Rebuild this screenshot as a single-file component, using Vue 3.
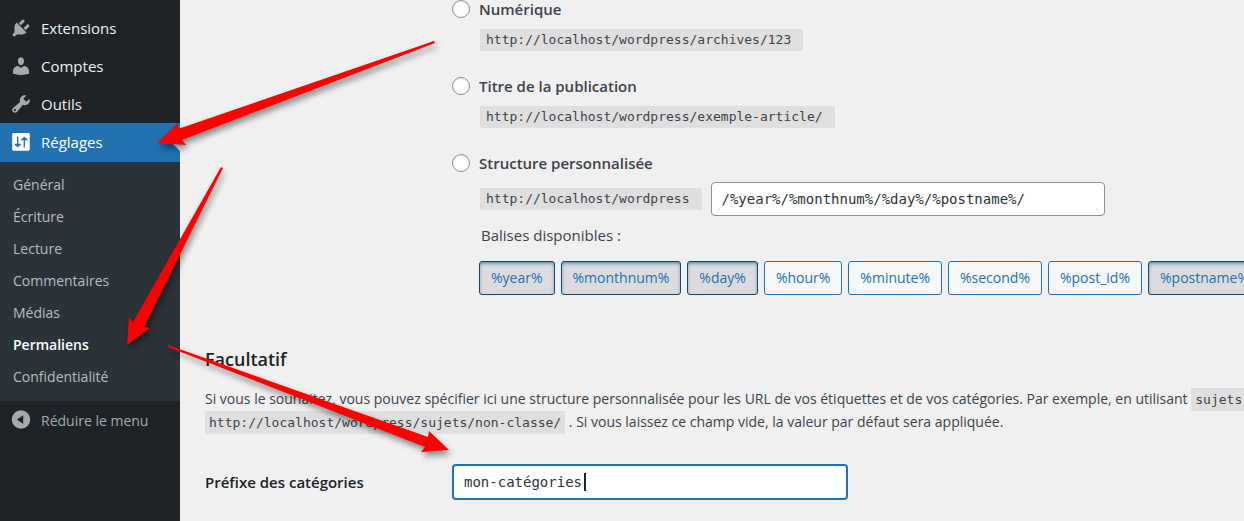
<script setup>
import { ref } from 'vue'

const menu = [
  { label: 'Extensions', d: 'M13.11 4.36L9.87 7.6 8 5.73l3.24-3.24c.35-.34 1.05-.2 1.56.32.52.51.66 1.21.31 1.55zm-8 1.77l.91-1.12 9.01 9.01-1.19.84c-.71.71-2.63 1.16-3.82 1.16H6.14L4.9 17.26c-.59.59-1.54.59-2.12 0-.59-.58-.59-1.53 0-2.12l1.24-1.24v-3.88c0-1.13.4-3.19 1.09-3.89zm7.26 3.97l3.24-3.24c.34-.35 1.04-.21 1.55.31.52.51.66 1.21.31 1.55l-3.24 3.25z' },
  { label: 'Comptes', d: 'M10 9.25c-2.27 0-2.73-3.44-2.73-3.44C7 4.02 7.82 2 9.97 2c2.16 0 2.98 2.02 2.71 3.81 0 0-.41 3.44-2.68 3.44zm0 2.57L12.72 10c2.39 0 4.52 2.33 4.52 4.53v2.49s-3.65 1.13-7.24 1.13c-3.65 0-7.24-1.13-7.24-1.13v-2.49c0-2.25 1.94-4.48 4.47-4.48z' },
  { label: 'Outils', d: 'M16.68 9.77c-1.34 1.34-3.3 1.67-4.95.99l-5.41 6.52c-.99.99-2.59.99-3.58 0s-.99-2.59 0-3.57l6.52-5.42c-.68-1.65-.35-3.61.99-4.95 1.28-1.28 3.12-1.62 4.72-1.06l-2.89 2.89 2.82 2.82 2.86-2.87c.53 1.58.18 3.39-1.08 4.65zM3.81 16.21c.4.39 1.04.39 1.43 0 .4-.4.4-1.04 0-1.43-.39-.4-1.03-.4-1.43 0-.39.39-.39 1.03 0 1.43z' },
  { label: 'Réglages', current: true, d: 'M3 1h14a1 1 0 0 1 1 1v14a1 1 0 0 1-1 1H3a1 1 0 0 1-1-1V2a1 1 0 0 1 1-1zM6.4 4v6.6H4.3v1.6h1l1.7 2 1.7-2h1v-1.6H7.6V4zM12.4 14.2h1.2V7.6h2.1V6h-1L13 4l-1.7 2h-1v1.6h2.1z' },
]
const submenu = ['Général', 'Écriture', 'Lecture', 'Commentaires', 'Médias', 'Permaliens', 'Confidentialité']
const options = [
  { id: 'numeric', label: 'Numérique', url: 'http://localhost/wordpress/archives/123' },
  { id: 'postname', label: 'Titre de la publication', url: 'http://localhost/wordpress/exemple-article/' },
]
const tags = ['year', 'monthnum', 'day', 'hour', 'minute', 'second', 'post_id', 'postname']
const structure = ref('/%year%/%monthnum%/%day%/%postname%/')
const prefix = ref('mon-catégories')
const isUsed = (tag) => structure.value.includes(`%${tag}%`)
</script>

<template>
  <div class="page">
    <nav class="sidebar">
      <a v-for="item in menu" :key="item.label" href="#" class="item" :class="{ current: item.current }">
        <svg viewBox="0 0 20 20" class="icon"><path :d="item.d" fill-rule="evenodd" /></svg>
        {{ item.label }}
      </a>
      <div class="submenu">
        <a v-for="s in submenu" :key="s" href="#" :class="{ active: s === 'Permaliens' }">{{ s }}</a>
      </div>
      <button type="button" class="item collapse">
        <svg viewBox="0 0 20 20" class="icon"><path fill-rule="evenodd" d="M10 1.2a8.4 8.4 0 1 1 0 16.8 8.4 8.4 0 0 1 0-16.8zM12 5.6 6.4 9.6l5.6 4z" /></svg>
        Réduire le menu
      </button>
    </nav>

    <main>
      <div class="options">
        <div v-for="o in options" :key="o.id" class="option">
          <input :id="o.id" type="radio" name="structure" />
          <label :for="o.id">{{ o.label }}</label>
          <div class="detail"><code>{{ o.url }}</code></div>
        </div>
        <div class="option">
          <input id="custom" type="radio" name="structure" />
          <label for="custom">Structure personnalisée</label>
          <div class="detail custom">
            <code>http://localhost/wordpress</code>
            <input v-model="structure" type="text" class="field" aria-label="Structure personnalisée" />
          </div>
          <p class="hint">Balises disponibles :</p>
          <div class="tags">
            <button v-for="t in tags" :key="t" type="button" :class="{ used: isUsed(t) }">%{{ t }}%</button>
          </div>
        </div>
      </div>

      <h2>Facultatif</h2>
      <p class="text">
        Si vous le souhaitez, vous pouvez spécifier ici une structure personnalisée pour les URL de vos étiquettes et de vos catégories. Par exemple, en utilisant <code>sujets</code><br />
        <code>http://localhost/wordpress/sujets/non-classe/</code> . Si vous laissez ce champ vide, la valeur par défaut sera appliquée.
      </p>
      <div class="row">
        <label for="prefix">Préfixe des catégories</label>
        <div class="focused">
          <input id="prefix" v-model="prefix" type="text" class="field" />
          <span class="caret"></span>
        </div>
      </div>
    </main>

    <svg class="arrows" width="460" height="470" viewBox="0 0 460 470">
      <path d="M157 143 178 123V129L434 41 435 43 182 140 186 145Z" />
      <path d="M127 345 129 317 133 322 221 167 223 168 144 327 150 328Z" />
      <path d="M449 450 429 431 428 437 168 345V347L425 447 421 452Z" />
    </svg>
  </div>
</template>

<style>
body {
  background: #f0f0f0;
}
</style>

<style scoped>
* {
  box-sizing: border-box;
}
.page {
  position: relative;
  display: flex;
  height: 100vh;
  overflow: hidden;
  background: #f0f0f0;
  color: #3c434a;
  font: 14px/23px "Open Sans", "Noto Sans", sans-serif;
}
.sidebar {
  flex: 0 0 180px;
  padding-top: 9px;
  background: #1d2327;
}
.item {
  display: flex;
  align-items: center;
  gap: 9px;
  width: 100%;
  height: 38px;
  padding: 0 10px;
  border: 0;
  background: none;
  color: #f0f0f1;
  font: inherit;
  font-size: 15px;
  text-decoration: none;
}
.icon {
  flex: none;
  width: 22px;
  height: 22px;
  fill: #a7aaad;
}
.current {
  position: relative;
  height: 39px;
  background: #2271b1;
  color: #fff;
}
.current .icon {
  fill: #fff;
}
.current::after {
  content: "";
  position: absolute;
  right: 0;
  top: 10px;
  border: 9px solid transparent;
  border-right-color: #f0f0f0;
  border-left: 0;
}
.submenu {
  display: flex;
  flex-direction: column;
  padding: 7px 13px 8px;
  background: #2c3338;
}
.submenu a {
  color: #b8bbbe;
  line-height: 32px;
  text-decoration: none;
}
.submenu .active {
  color: #fff;
  font-weight: 600;
}
.collapse {
  color: #a7aaad;
  font-size: 14px;
}
main {
  flex: 1;
  min-width: 0;
  padding-left: 25px;
}
.options {
  display: flex;
  flex-direction: column;
  gap: 26px;
  padding-left: 247px;
}
.option {
  display: grid;
  grid-template-columns: 18px 1fr;
  column-gap: 9px;
}
.option label {
  font-size: 15px;
  font-weight: 600;
  line-height: 18px;
}
input[type="radio"] {
  appearance: none;
  width: 18px;
  height: 18px;
  margin: 0;
  border: 1px solid #8c8f94;
  border-radius: 50%;
  background: #fff;
  box-shadow: inset 0 1px 2px rgba(0, 0, 0, 0.1);
}
.detail,
.hint,
.tags {
  grid-column: 2;
}
.detail {
  display: flex;
  align-items: center;
  margin-top: 11px;
  padding-left: 1px;
}
code {
  padding: 4px 6px;
  background: #dfdfdf;
  font: 13px/14px "DejaVu Sans Mono", monospace;
}
.option code {
  padding-right: 12px;
}
.text code {
  padding: 4px;
}
.custom {
  gap: 9px;
  margin-top: 10px;
}
.field {
  width: 394px;
  height: 34px;
  padding: 0 10px;
  border: 1px solid #8c8f94;
  border-radius: 4px;
  background: #fff;
  color: #2c3338;
  font: 14px "DejaVu Sans Mono", monospace;
  outline: 0;
}
.hint {
  margin: 8px 0 14px 2px;
  font-size: 15px;
}
.tags {
  display: flex;
  gap: 6px;
}
.tags button {
  flex: none;
  height: 34px;
  padding: 0 11px 2px;
  border: 1px solid #2271b1;
  border-radius: 3px;
  background: #f6f7f7;
  color: #2271b1;
  font: inherit;
}
.tags .used {
  border-color: #0a4b78;
  background: #dcdcde;
  box-shadow: inset 0 2px 5px -2px #0a4b78;
}
h2 {
  margin: 52px 0 16px;
  color: #1d2327;
  font-size: 18px;
  font-weight: 600;
  line-height: 24px;
}
.text {
  margin: 0;
  white-space: nowrap;
}
.row {
  display: grid;
  grid-template-columns: 247px 1fr;
  align-items: center;
  margin-top: 31px;
}
.row label {
  color: #1d2327;
  font-size: 15px;
  font-weight: 600;
}
.focused {
  position: relative;
}
.focused .field {
  display: block;
  width: 396px;
  height: 36px;
  border: 2px solid #2271b1;
}
.caret {
  position: absolute;
  left: 132px;
  top: 9px;
  width: 2px;
  height: 18px;
  background: #1d2327;
}
.arrows {
  position: absolute;
  left: 0;
  top: 0;
  fill: #f00;
  pointer-events: none;
  filter: drop-shadow(2px 4px 3px rgba(0, 0, 0, 0.45));
}
</style>
